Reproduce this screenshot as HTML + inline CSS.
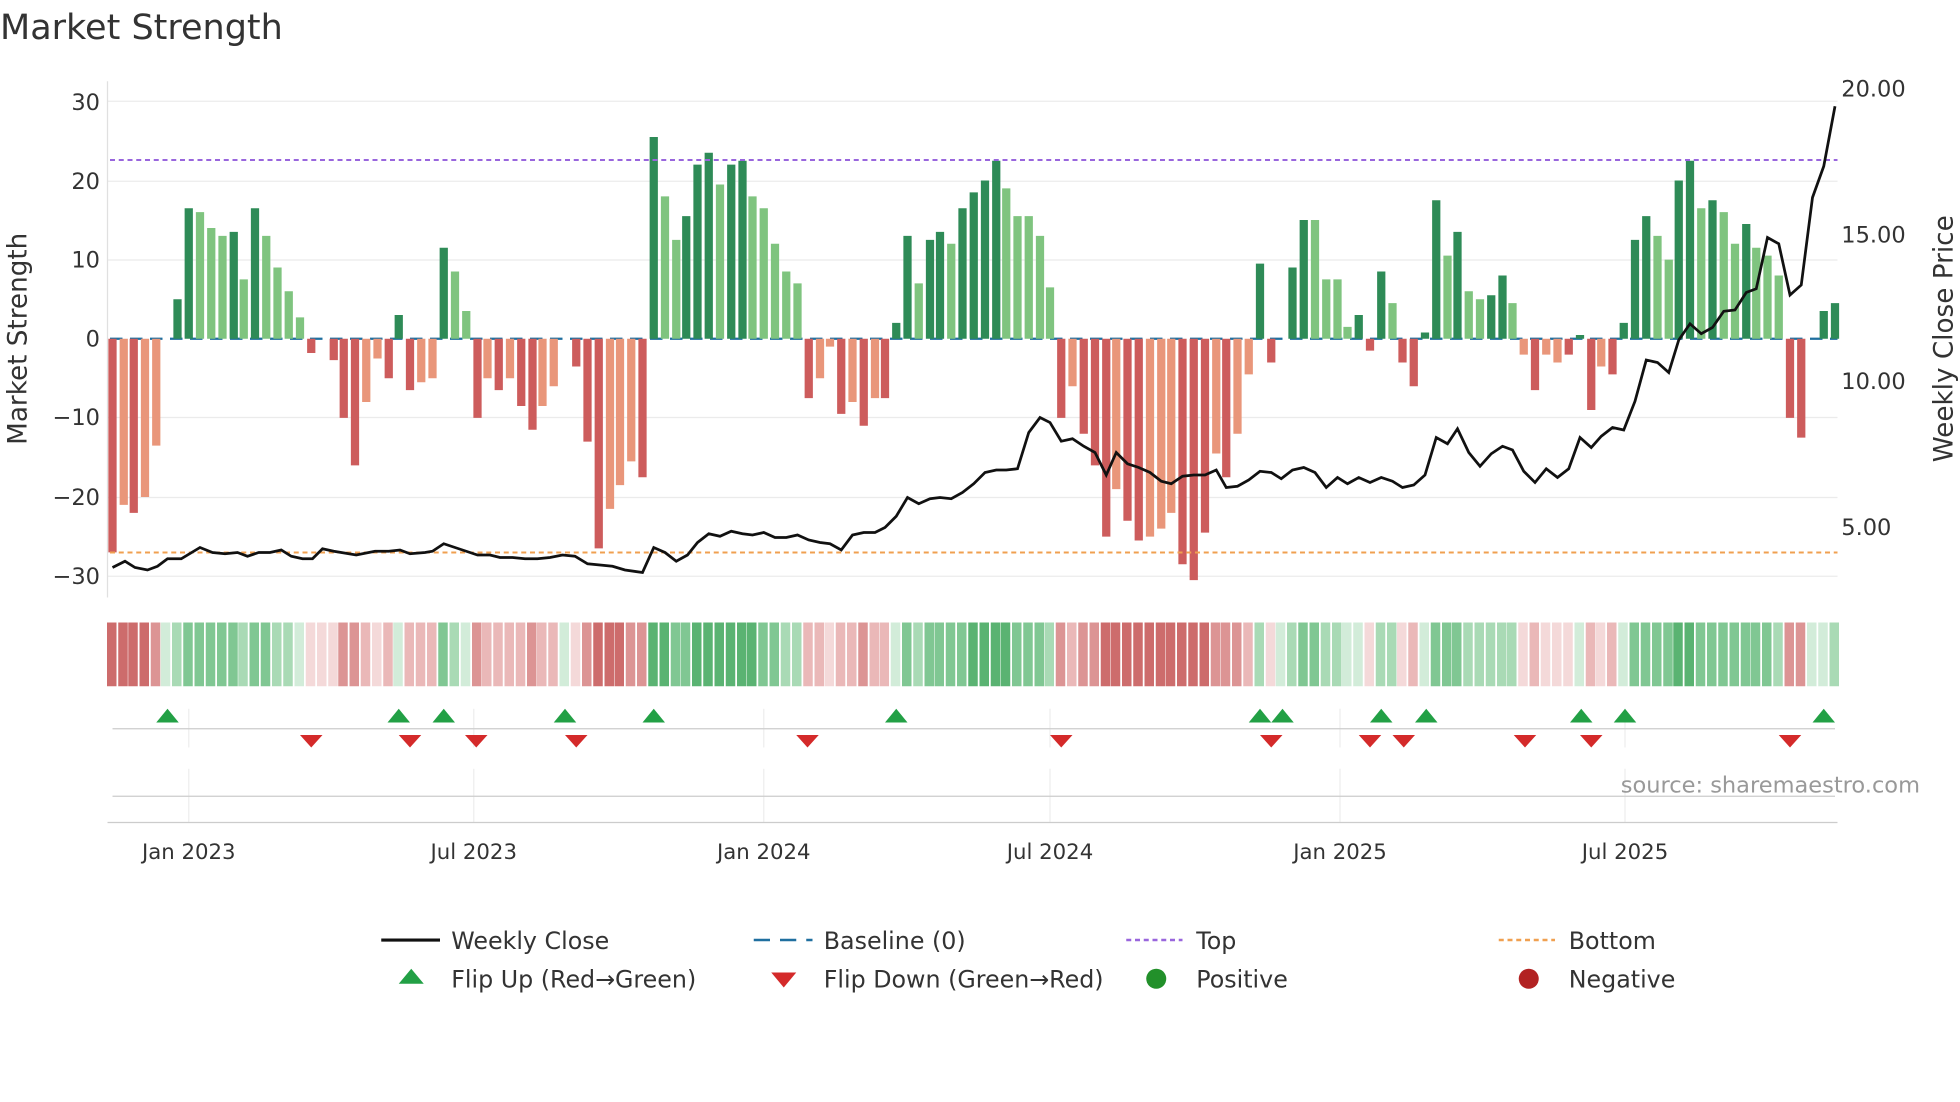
<!DOCTYPE html>
<html><head><meta charset="utf-8"><style>
html,body{margin:0;padding:0;background:#fff;}
svg{display:block;font-family:"DejaVu Sans","Liberation Sans",sans-serif;}
.bars rect{width:6.6px}
.A{fill:#2e8b57}.B{fill:#7fc47f}.C{fill:#cd5c5c}.D{fill:#e9967a}
.s rect{y:498px;height:51px;width:7.6px}
.g1{fill:#d2ecd9}.g2{fill:#a9dab5}.g3{fill:#80c793}.g4{fill:#5ab372}
.r1{fill:#f4d9d9}.r2{fill:#eab8b8}.r3{fill:#dc9494}.r4{fill:#cd6c6c}
</style></head><body>
<svg width="1960" height="1102" viewBox="0 0 1568 881.6" xmlns="http://www.w3.org/2000/svg">
<rect width="1568" height="882" fill="#fff"/>
<text x="0" y="31" font-size="28" fill="#333">Market Strength</text>
<g stroke="#ebebeb">
<line x1="86" x2="1470" y1="81" y2="81"/><line x1="86" x2="1470" y1="145" y2="145"/><line x1="86" x2="1470" y1="208" y2="208"/><line x1="86" x2="1470" y1="334" y2="334"/><line x1="86" x2="1470" y1="398" y2="398"/><line x1="86" x2="1470" y1="461" y2="461"/>
</g>
<line x1="86" y1="65" x2="86" y2="478" stroke="#e0e0e0"/>
<g font-size="18" fill="#333" text-anchor="end">
<text x="80" y="88">30</text><text x="80" y="151">20</text><text x="80" y="214">10</text><text x="80" y="277">0</text>
<text x="80" y="340">−10</text><text x="80" y="404">−20</text><text x="80" y="467">−30</text>
</g>
<g font-size="18" fill="#333">
<text x="1473" y="77">20.00</text><text x="1473" y="194">15.00</text><text x="1473" y="311">10.00</text><text x="1473" y="428">5.00</text>
</g>
<text transform="translate(21,271) rotate(-90)" font-size="21" fill="#333" text-anchor="middle">Market Strength</text>
<text transform="translate(1562,271) rotate(-90)" font-size="21" fill="#333" text-anchor="middle">Weekly Close Price</text>
<line x1="88" y1="271" x2="1470" y2="271" stroke="#1f6f9f" stroke-width="1.8" stroke-dasharray="10,6"/>
<g class="bars">
<rect class="C" x="86.7" y="271" height="170.9"/>
<rect class="D" x="95.7" y="271" height="132.9"/>
<rect class="C" x="103.7" y="271" height="139.3"/>
<rect class="D" x="112.7" y="271" height="126.6"/>
<rect class="D" x="121.7" y="271" height="85.5"/>
<rect class="A" x="138.7" y="239.4" height="31.6"/>
<rect class="A" x="147.7" y="166.6" height="104.4"/>
<rect class="B" x="156.7" y="169.7" height="101.3"/>
<rect class="B" x="165.7" y="182.4" height="88.6"/>
<rect class="B" x="174.7" y="188.7" height="82.3"/>
<rect class="A" x="183.7" y="185.5" height="85.5"/>
<rect class="B" x="191.7" y="223.5" height="47.5"/>
<rect class="A" x="200.7" y="166.6" height="104.4"/>
<rect class="B" x="209.7" y="188.7" height="82.3"/>
<rect class="B" x="218.7" y="214" height="57"/>
<rect class="B" x="227.7" y="233" height="38"/>
<rect class="B" x="236.7" y="253.9" height="17.1"/>
<rect class="C" x="245.7" y="271" height="11.4"/>
<rect class="C" x="263.7" y="271" height="17.1"/>
<rect class="C" x="271.7" y="271" height="63.3"/>
<rect class="C" x="280.7" y="271" height="101.3"/>
<rect class="D" x="289.7" y="271" height="50.6"/>
<rect class="D" x="298.7" y="271" height="15.8"/>
<rect class="C" x="307.7" y="271" height="31.6"/>
<rect class="A" x="315.7" y="252" height="19"/>
<rect class="C" x="324.7" y="271" height="41.1"/>
<rect class="D" x="333.7" y="271" height="34.8"/>
<rect class="D" x="342.7" y="271" height="31.6"/>
<rect class="A" x="351.7" y="198.2" height="72.8"/>
<rect class="B" x="360.7" y="217.2" height="53.8"/>
<rect class="B" x="369.7" y="248.8" height="22.2"/>
<rect class="C" x="378.7" y="271" height="63.3"/>
<rect class="D" x="386.7" y="271" height="31.6"/>
<rect class="C" x="395.7" y="271" height="41.1"/>
<rect class="D" x="404.7" y="271" height="31.6"/>
<rect class="C" x="413.7" y="271" height="53.8"/>
<rect class="C" x="422.7" y="271" height="72.8"/>
<rect class="D" x="430.7" y="271" height="53.8"/>
<rect class="D" x="439.7" y="271" height="38"/>
<rect class="C" x="457.7" y="271" height="22.2"/>
<rect class="C" x="466.7" y="271" height="82.3"/>
<rect class="C" x="475.7" y="271" height="167.7"/>
<rect class="D" x="484.7" y="271" height="136.1"/>
<rect class="D" x="492.7" y="271" height="117.1"/>
<rect class="D" x="501.7" y="271" height="98.1"/>
<rect class="C" x="510.7" y="271" height="110.8"/>
<rect class="A" x="519.7" y="109.6" height="161.4"/>
<rect class="B" x="528.7" y="157.1" height="113.9"/>
<rect class="B" x="537.7" y="191.9" height="79.1"/>
<rect class="A" x="545.7" y="172.9" height="98.1"/>
<rect class="A" x="554.7" y="131.7" height="139.3"/>
<rect class="A" x="563.7" y="122.2" height="148.8"/>
<rect class="B" x="572.7" y="147.6" height="123.4"/>
<rect class="A" x="581.7" y="131.7" height="139.3"/>
<rect class="A" x="590.7" y="128.6" height="142.4"/>
<rect class="B" x="598.7" y="157.1" height="113.9"/>
<rect class="B" x="607.7" y="166.6" height="104.4"/>
<rect class="B" x="616.7" y="195" height="76"/>
<rect class="B" x="625.7" y="217.2" height="53.8"/>
<rect class="B" x="634.7" y="226.7" height="44.3"/>
<rect class="C" x="643.7" y="271" height="47.5"/>
<rect class="D" x="652.7" y="271" height="31.6"/>
<rect class="D" x="660.7" y="271" height="6.3"/>
<rect class="C" x="669.7" y="271" height="60.1"/>
<rect class="D" x="678.7" y="271" height="50.6"/>
<rect class="C" x="687.7" y="271" height="69.6"/>
<rect class="D" x="696.7" y="271" height="47.5"/>
<rect class="C" x="704.7" y="271" height="47.5"/>
<rect class="A" x="713.7" y="258.3" height="12.7"/>
<rect class="A" x="722.7" y="188.7" height="82.3"/>
<rect class="B" x="731.7" y="226.7" height="44.3"/>
<rect class="A" x="740.7" y="191.9" height="79.1"/>
<rect class="A" x="748.7" y="185.5" height="85.5"/>
<rect class="B" x="757.7" y="195" height="76"/>
<rect class="A" x="766.7" y="166.6" height="104.4"/>
<rect class="A" x="775.7" y="153.9" height="117.1"/>
<rect class="A" x="784.7" y="144.4" height="126.6"/>
<rect class="A" x="793.7" y="128.6" height="142.4"/>
<rect class="B" x="801.7" y="150.7" height="120.3"/>
<rect class="B" x="810.7" y="172.9" height="98.1"/>
<rect class="B" x="819.7" y="172.9" height="98.1"/>
<rect class="B" x="828.7" y="188.7" height="82.3"/>
<rect class="B" x="836.7" y="229.9" height="41.1"/>
<rect class="C" x="845.7" y="271" height="63.3"/>
<rect class="D" x="854.7" y="271" height="38"/>
<rect class="C" x="863.7" y="271" height="76"/>
<rect class="C" x="872.7" y="271" height="101.3"/>
<rect class="C" x="881.7" y="271" height="158.3"/>
<rect class="D" x="889.7" y="271" height="120.3"/>
<rect class="C" x="898.7" y="271" height="145.6"/>
<rect class="C" x="907.7" y="271" height="161.4"/>
<rect class="D" x="916.7" y="271" height="158.3"/>
<rect class="D" x="925.7" y="271" height="151.9"/>
<rect class="D" x="933.7" y="271" height="139.3"/>
<rect class="C" x="942.7" y="271" height="180.4"/>
<rect class="C" x="951.7" y="271" height="193.1"/>
<rect class="C" x="960.7" y="271" height="155.1"/>
<rect class="D" x="969.7" y="271" height="91.8"/>
<rect class="C" x="977.7" y="271" height="110.8"/>
<rect class="D" x="986.7" y="271" height="76"/>
<rect class="D" x="995.7" y="271" height="28.5"/>
<rect class="A" x="1004.7" y="210.9" height="60.1"/>
<rect class="C" x="1013.7" y="271" height="19"/>
<rect class="A" x="1030.7" y="214" height="57"/>
<rect class="A" x="1039.7" y="176" height="95"/>
<rect class="B" x="1048.7" y="176" height="95"/>
<rect class="B" x="1057.7" y="223.5" height="47.5"/>
<rect class="B" x="1066.7" y="223.5" height="47.5"/>
<rect class="B" x="1074.7" y="261.5" height="9.5"/>
<rect class="A" x="1083.7" y="252" height="19"/>
<rect class="C" x="1092.7" y="271" height="9.5"/>
<rect class="A" x="1101.7" y="217.2" height="53.8"/>
<rect class="B" x="1110.7" y="242.5" height="28.5"/>
<rect class="C" x="1118.7" y="271" height="19"/>
<rect class="C" x="1127.7" y="271" height="38"/>
<rect class="A" x="1136.7" y="266" height="5"/>
<rect class="A" x="1145.7" y="160.2" height="110.8"/>
<rect class="B" x="1154.7" y="204.5" height="66.5"/>
<rect class="A" x="1162.7" y="185.5" height="85.5"/>
<rect class="B" x="1171.7" y="233" height="38"/>
<rect class="B" x="1180.7" y="239.4" height="31.6"/>
<rect class="A" x="1189.7" y="236.2" height="34.8"/>
<rect class="A" x="1198.7" y="220.4" height="50.6"/>
<rect class="B" x="1206.7" y="242.5" height="28.5"/>
<rect class="D" x="1215.7" y="271" height="12.7"/>
<rect class="C" x="1224.7" y="271" height="41.1"/>
<rect class="D" x="1233.7" y="271" height="12.7"/>
<rect class="D" x="1242.7" y="271" height="19"/>
<rect class="C" x="1251.7" y="271" height="12.7"/>
<rect class="A" x="1260.7" y="268" height="3"/>
<rect class="C" x="1269.7" y="271" height="57"/>
<rect class="D" x="1277.7" y="271" height="22.2"/>
<rect class="C" x="1286.7" y="271" height="28.5"/>
<rect class="A" x="1295.7" y="258.3" height="12.7"/>
<rect class="A" x="1304.7" y="191.9" height="79.1"/>
<rect class="A" x="1313.7" y="172.9" height="98.1"/>
<rect class="B" x="1322.7" y="188.7" height="82.3"/>
<rect class="B" x="1331.7" y="207.7" height="63.3"/>
<rect class="A" x="1339.7" y="144.4" height="126.6"/>
<rect class="A" x="1348.7" y="128.6" height="142.4"/>
<rect class="B" x="1357.7" y="166.6" height="104.4"/>
<rect class="A" x="1366.7" y="160.2" height="110.8"/>
<rect class="B" x="1375.7" y="169.7" height="101.3"/>
<rect class="B" x="1384.7" y="195" height="76"/>
<rect class="A" x="1393.7" y="179.2" height="91.8"/>
<rect class="B" x="1401.7" y="198.2" height="72.8"/>
<rect class="B" x="1410.7" y="204.5" height="66.5"/>
<rect class="B" x="1419.7" y="220.4" height="50.6"/>
<rect class="C" x="1428.7" y="271" height="63.3"/>
<rect class="C" x="1437.7" y="271" height="79.1"/>
<rect class="A" x="1455.7" y="248.8" height="22.2"/>
<rect class="A" x="1464.7" y="242.5" height="28.5"/>
</g>
<line x1="88" y1="128" x2="1470" y2="128" stroke="#9966dd" stroke-width="1.6" stroke-dasharray="4,3"/>
<line x1="88" y1="442" x2="1470" y2="442" stroke="#f0a050" stroke-width="1.6" stroke-dasharray="4,3"/>
<polyline fill="none" stroke="#111" stroke-width="2.2" points="90,454 100,449 108,454 118,456 126,453 134,447 145,447 160,438 170,442 180,443 190,442 198,445 207,442 216,442 225,440 233,445 242,447 250,447 258,439 267,441 285,444 300,441 311,441 320,440 328,443 340,442 346,441 355,435 364,438 373,441 382,444 392,444 400,446 410,446 420,447 430,447 440,446 450,444 460,445 470,451 480,452 490,453 500,456 514,458 523,438 532,442 541,449 550,444 558,434 567,427 576,429 585,425 594,427 602,428 611,426 620,430 629,430 638,428 647,432 656,434 664,435 673,440 682,428 691,426 700,426 708,422 717,413 726,398 735,403 744,399 752,398 761,399 770,394 779,387 788,378 797,376 805,376 814,375 823,346 832,334 840,338 849,353 858,351 867,357 876,362 885,380 893,362 902,371 911,374 920,378 929,385 937,387 946,381 955,380 964,380 973,376 981,390 990,389 999,384 1008,377 1017,378 1025,383 1034,376 1043,374 1052,378 1061,390 1070,382 1078,387 1087,382 1096,386 1105,382 1114,385 1122,390 1131,388 1140,380 1149,350 1158,355 1166,343 1175,362 1184,373 1193,363 1202,357 1210,360 1219,377 1228,386 1237,375 1246,382 1255,375 1264,350 1273,358 1281,349 1290,342 1299,344 1308,321 1317,288 1326,290 1335,298 1343,272 1352,259 1361,267 1370,262 1379,249 1388,248 1397,234 1405,231 1414,190 1423,195 1432,236 1441,228 1450,158 1459,133 1468,85"/>
<g class="s">
<rect class="r4" x="85.6"/><rect class="r4" x="94.6"/><rect class="r4" x="102.6"/><rect class="r4" x="111.6"/><rect class="r3" x="120.6"/><rect class="g1" x="128.6"/><rect class="g2" x="137.6"/><rect class="g3" x="146.6"/><rect class="g3" x="155.6"/><rect class="g3" x="164.6"/><rect class="g3" x="173.6"/><rect class="g3" x="182.6"/><rect class="g2" x="190.6"/><rect class="g3" x="199.6"/><rect class="g3" x="208.6"/><rect class="g2" x="217.6"/><rect class="g2" x="226.6"/><rect class="g1" x="235.6"/><rect class="r1" x="244.6"/><rect class="r1" x="253.6"/><rect class="r1" x="262.6"/><rect class="r3" x="270.6"/><rect class="r3" x="279.6"/><rect class="r2" x="288.6"/><rect class="r1" x="297.6"/><rect class="r2" x="306.6"/><rect class="g1" x="314.6"/><rect class="r2" x="323.6"/><rect class="r2" x="332.6"/><rect class="r2" x="341.6"/><rect class="g3" x="350.6"/><rect class="g2" x="359.6"/><rect class="g1" x="368.6"/><rect class="r3" x="377.6"/><rect class="r2" x="385.6"/><rect class="r2" x="394.6"/><rect class="r2" x="403.6"/><rect class="r2" x="412.6"/><rect class="r3" x="421.6"/><rect class="r2" x="429.6"/><rect class="r2" x="438.6"/><rect class="g1" x="447.6"/><rect class="r1" x="456.6"/><rect class="r3" x="465.6"/><rect class="r4" x="474.6"/><rect class="r4" x="483.6"/><rect class="r4" x="491.6"/><rect class="r3" x="500.6"/><rect class="r3" x="509.6"/><rect class="g4" x="518.6"/><rect class="g4" x="527.6"/><rect class="g3" x="536.6"/><rect class="g3" x="544.6"/><rect class="g4" x="553.6"/><rect class="g4" x="562.6"/><rect class="g4" x="571.6"/><rect class="g4" x="580.6"/><rect class="g4" x="589.6"/><rect class="g4" x="597.6"/><rect class="g3" x="606.6"/><rect class="g3" x="615.6"/><rect class="g2" x="624.6"/><rect class="g2" x="633.6"/><rect class="r2" x="642.6"/><rect class="r2" x="651.6"/><rect class="r1" x="659.6"/><rect class="r2" x="668.6"/><rect class="r2" x="677.6"/><rect class="r3" x="686.6"/><rect class="r2" x="695.6"/><rect class="r2" x="703.6"/><rect class="g1" x="712.6"/><rect class="g3" x="721.6"/><rect class="g2" x="730.6"/><rect class="g3" x="739.6"/><rect class="g3" x="747.6"/><rect class="g3" x="756.6"/><rect class="g3" x="765.6"/><rect class="g4" x="774.6"/><rect class="g4" x="783.6"/><rect class="g4" x="792.6"/><rect class="g4" x="800.6"/><rect class="g3" x="809.6"/><rect class="g3" x="818.6"/><rect class="g3" x="827.6"/><rect class="g2" x="835.6"/><rect class="r3" x="844.6"/><rect class="r2" x="853.6"/><rect class="r3" x="862.6"/><rect class="r3" x="871.6"/><rect class="r4" x="880.6"/><rect class="r4" x="888.6"/><rect class="r4" x="897.6"/><rect class="r4" x="906.6"/><rect class="r4" x="915.6"/><rect class="r4" x="924.6"/><rect class="r4" x="932.6"/><rect class="r4" x="941.6"/><rect class="r4" x="950.6"/><rect class="r4" x="959.6"/><rect class="r3" x="968.6"/><rect class="r3" x="976.6"/><rect class="r3" x="985.6"/><rect class="r2" x="994.6"/><rect class="g2" x="1003.6"/><rect class="r1" x="1012.6"/><rect class="g1" x="1020.6"/><rect class="g2" x="1029.6"/><rect class="g3" x="1038.6"/><rect class="g3" x="1047.6"/><rect class="g2" x="1056.6"/><rect class="g2" x="1065.6"/><rect class="g1" x="1073.6"/><rect class="g1" x="1082.6"/><rect class="r1" x="1091.6"/><rect class="g2" x="1100.6"/><rect class="g2" x="1109.6"/><rect class="r1" x="1117.6"/><rect class="r2" x="1126.6"/><rect class="g1" x="1135.6"/><rect class="g3" x="1144.6"/><rect class="g3" x="1153.6"/><rect class="g3" x="1161.6"/><rect class="g2" x="1170.6"/><rect class="g2" x="1179.6"/><rect class="g2" x="1188.6"/><rect class="g2" x="1197.6"/><rect class="g2" x="1205.6"/><rect class="r1" x="1214.6"/><rect class="r2" x="1223.6"/><rect class="r1" x="1232.6"/><rect class="r1" x="1241.6"/><rect class="r1" x="1250.6"/><rect class="g1" x="1259.6"/><rect class="r2" x="1268.6"/><rect class="r1" x="1276.6"/><rect class="r2" x="1285.6"/><rect class="g1" x="1294.6"/><rect class="g3" x="1303.6"/><rect class="g3" x="1312.6"/><rect class="g3" x="1321.6"/><rect class="g3" x="1330.6"/><rect class="g4" x="1338.6"/><rect class="g4" x="1347.6"/><rect class="g3" x="1356.6"/><rect class="g3" x="1365.6"/><rect class="g3" x="1374.6"/><rect class="g3" x="1383.6"/><rect class="g3" x="1392.6"/><rect class="g3" x="1400.6"/><rect class="g3" x="1409.6"/><rect class="g2" x="1418.6"/><rect class="r3" x="1427.6"/><rect class="r3" x="1436.6"/><rect class="g1" x="1445.6"/><rect class="g1" x="1454.6"/><rect class="g2" x="1463.6"/>
</g>
<g stroke="#eee">
<line x1="151" x2="151" y1="567" y2="598"/><line x1="379" x2="379" y1="567" y2="598"/><line x1="611" x2="611" y1="567" y2="598"/><line x1="840" x2="840" y1="567" y2="598"/><line x1="1072" x2="1072" y1="567" y2="598"/><line x1="1300" x2="1300" y1="567" y2="598"/>
<line x1="151" x2="151" y1="615" y2="658"/><line x1="379" x2="379" y1="615" y2="658"/><line x1="611" x2="611" y1="615" y2="658"/><line x1="840" x2="840" y1="615" y2="658"/><line x1="1072" x2="1072" y1="615" y2="658"/><line x1="1300" x2="1300" y1="615" y2="658"/>
</g>
<line x1="90" y1="583" x2="1468" y2="583" stroke="#ccc"/>
<line x1="90" y1="637" x2="1468" y2="637" stroke="#ccc"/>
<line x1="86" y1="658" x2="1470" y2="658" stroke="#ccc"/>
<g fill="#22a045">
<polygon points="125,578 134,567 143,578"/><polygon points="310,578 319,567 328,578"/><polygon points="346,578 355,567 364,578"/><polygon points="443,578 452,567 461,578"/><polygon points="514,578 523,567 532,578"/><polygon points="708,578 717,567 726,578"/><polygon points="999,578 1008,567 1017,578"/><polygon points="1017,578 1026,567 1035,578"/><polygon points="1096,578 1105,567 1114,578"/><polygon points="1132,578 1141,567 1150,578"/><polygon points="1256,578 1265,567 1274,578"/><polygon points="1291,578 1300,567 1309,578"/><polygon points="1450,578 1459,567 1468,578"/>
</g>
<g fill="#d42a2a">
<polygon points="240,588 258,588 249,598"/><polygon points="319,588 337,588 328,598"/><polygon points="372,588 390,588 381,598"/><polygon points="452,588 470,588 461,598"/><polygon points="637,588 655,588 646,598"/><polygon points="840,588 858,588 849,598"/><polygon points="1008,588 1026,588 1017,598"/><polygon points="1087,588 1105,588 1096,598"/><polygon points="1114,588 1132,588 1123,598"/><polygon points="1211,588 1229,588 1220,598"/><polygon points="1264,588 1282,588 1273,598"/><polygon points="1423,588 1441,588 1432,598"/>
</g>
<text x="1536" y="634" font-size="18" fill="#999" text-anchor="end">source: sharemaestro.com</text>
<g font-size="17" fill="#333" text-anchor="middle">
<text x="151" y="687">Jan 2023</text><text x="379" y="687">Jul 2023</text><text x="611" y="687">Jan 2024</text>
<text x="840" y="687">Jul 2024</text><text x="1072" y="687">Jan 2025</text><text x="1300" y="687">Jul 2025</text>
</g>
<g font-size="19" fill="#333">
<line x1="305" y1="752" x2="352" y2="752" stroke="#111" stroke-width="2.5"/><text x="361" y="759">Weekly Close</text>
<line x1="603" y1="752" x2="650" y2="752" stroke="#1f6f9f" stroke-width="2" stroke-dasharray="13,8"/><text x="659" y="759">Baseline (0)</text>
<line x1="901" y1="752" x2="946" y2="752" stroke="#9966dd" stroke-width="2" stroke-dasharray="4,3"/><text x="957" y="759">Top</text>
<line x1="1199" y1="752" x2="1244" y2="752" stroke="#f0a050" stroke-width="2" stroke-dasharray="4,3"/><text x="1255" y="759">Bottom</text>
<polygon points="319,787 329,775 339,787" fill="#22a045"/><text x="361" y="790">Flip Up (Red→Green)</text>
<polygon points="617,778 637,778 627,790" fill="#d42a2a"/><text x="659" y="790">Flip Down (Green→Red)</text>
<circle cx="925" cy="783" r="8" fill="#22902a"/><text x="957" y="790">Positive</text>
<circle cx="1223" cy="783" r="8" fill="#b22222"/><text x="1255" y="790">Negative</text>
</g>
</svg>
</body></html>
